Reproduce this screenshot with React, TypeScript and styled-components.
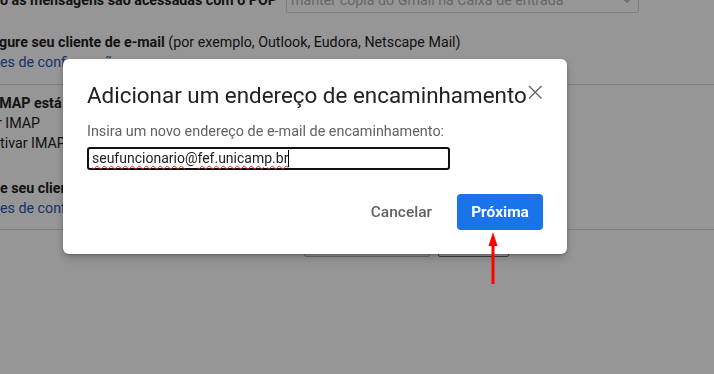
import React from "react";
import styled, { createGlobalStyle } from "styled-components";

const GlobalStyle = createGlobalStyle`
  html, body { margin: 0; padding: 0; background: #ffffff; overflow: hidden; }
  body { font-family: Roboto, "Liberation Sans", Arial, sans-serif; color: #222222; }
  * { box-sizing: border-box; }
`;

const Page = styled.div`
  width: 714px;
  height: 374px;
  margin-top: -14px;
  font-size: 14.25px;
  line-height: 20px;
  white-space: nowrap;
  overflow: hidden;
`;

const PopRow = styled.div`
  display: flex;
  align-items: center;
  height: 27px;
`;

const PopLabel = styled.div`
  width: 286px;
  font-weight: 700;
`;

const SelectBox = styled.div`
  width: 353px;
  height: 27px;
  border: 1px solid #d6d6d6;
  border-radius: 2px;
  display: flex;
  align-items: center;
  justify-content: space-between;
  padding: 0 6px 0 4px;
  color: #b0b0b0;
`;

const Line = styled.div<{ $shift?: number; $gap?: number }>`
  margin-left: ${(p) => p.$shift ?? 0}px;
  margin-top: ${(p) => p.$gap ?? 0}px;
  height: 20px;
`;

const Bold = styled.span`
  font-weight: 700;
`;

const Link = styled.span`
  color: #2a55b8;
`;

const Rule = styled.hr<{ $gap: number }>`
  margin: ${(p) => p.$gap}px 0 0 0;
  border: none;
  border-top: 1px solid #d9d9d9;
  height: 0;
`;

const Section = styled.div<{ $pad: number }>`
  padding-top: ${(p) => p.$pad}px;
`;

const ButtonBar = styled.div`
  display: flex;
  gap: 8px;
  padding-left: 304px;
  margin-top: 3px;
`;

const PageButton = styled.div<{ $w: number; $dark?: boolean }>`
  width: ${(p) => p.$w}px;
  height: 24px;
  border: 1px solid ${(p) => (p.$dark ? "#6a6a6a" : "#b5b5b5")};
  border-radius: 2px;
  background: ${(p) => (p.$dark ? "#ffffff" : "#f2f2f2")};
`;

const Overlay = styled.div`
  position: fixed;
  inset: 0;
  background: rgba(0, 0, 0, 0.41);
`;

const Dialog = styled.div`
  position: fixed;
  left: 63px;
  top: 59px;
  width: 504px;
  background: #ffffff;
  border-radius: 6px;
  box-shadow: 0 4px 10px rgba(0, 0, 0, 0.22), 0 1px 3px rgba(0, 0, 0, 0.18);
  padding: 22px 24px 24px 24px;
  display: flex;
  flex-direction: column;
`;

const TitleRow = styled.div`
  display: flex;
  justify-content: space-between;
  align-items: flex-start;
  height: 28px;
`;

const Title = styled.h2`
  margin: 0;
  font-family: Roboto, "Liberation Sans", sans-serif;
  font-size: 22.4px;
  font-weight: 400;
  line-height: 28px;
  color: #202124;
  white-space: nowrap;
`;

const CloseIcon = styled.svg`
  width: 16px;
  height: 16px;
  margin-top: 3px;
  flex: none;
`;

const Prompt = styled.div`
  margin-top: 13px;
  font-size: 14.4px;
  line-height: 20px;
  color: #5f6368;
  white-space: nowrap;
`;

const InputBox = styled.div`
  margin-top: 5px;
  width: 363px;
  height: 23px;
  border: 2px solid #101010;
  border-radius: 3px;
  padding-left: 3px;
  font-size: 14px;
  line-height: 19px;
  color: #202124;
  display: flex;
  align-items: flex-start;
  white-space: nowrap;
`;

const Misspelled = styled.span`
  text-decoration: underline wavy #e02020;
  text-decoration-thickness: 1px;
  text-underline-offset: 2px;
`;

const Caret = styled.span`
  display: inline-block;
  width: 1px;
  height: 17px;
  margin-top: 1px;
  background: #000000;
`;

const Actions = styled.div`
  margin-top: 24px;
  display: flex;
  justify-content: flex-end;
  align-items: center;
  gap: 9px;
`;

const TextButton = styled.button`
  height: 36px;
  padding: 0 16px;
  border: none;
  background: transparent;
  font-family: Roboto, "Liberation Sans", sans-serif;
  font-size: 15.5px;
  font-weight: 500;
  color: #5f6368;
  border-radius: 4px;
`;

const PrimaryButton = styled.button`
  height: 36px;
  width: 86px;
  border: none;
  background: #1a73e8;
  font-family: Roboto, "Liberation Sans", sans-serif;
  font-size: 15.5px;
  font-weight: 700;
  color: #ffffff;
  border-radius: 4px;
`;

const Arrow = styled.svg`
  position: fixed;
  left: 486px;
  top: 230px;
  width: 14px;
  height: 56px;
`;

export default function App() {
  return (
    <>
      <GlobalStyle />
      <Page>
        <PopRow>
          <PopLabel>o as mensagens são acessadas com o POP</PopLabel>
          <SelectBox>
            <span>manter cópia do Gmail na Caixa de entrada</span>
            <svg width="10" height="6" viewBox="0 0 10 6">
              <path d="M1 1l4 4 4-4" fill="none" stroke="#b0b0b0" strokeWidth="1.5" />
            </svg>
          </SelectBox>
        </PopRow>
        <Line $gap={19} $shift={-1}>
          <Bold>gure seu cliente de e-mail</Bold> (por exemplo, Outlook, Eudora, Netscape Mail)
        </Line>
        <Line>
          <Link>es de configuração</Link>
        </Line>
        <Rule $gap={12} />
        <Section $pad={8}>
          <Line $shift={-5}>
            <Bold>IMAP está ativado</Bold>
          </Line>
          <Line $shift={-3}>r IMAP</Line>
          <Line $shift={0}>tivar IMAP</Line>
          <Line $gap={25}>
            <Bold>e seu cliente de e-mail</Bold>
          </Line>
          <Line>
            <Link>es de configuração</Link>
          </Line>
        </Section>
        <Rule $gap={11} />
        <ButtonBar>
          <PageButton $w={126} />
          <PageButton $w={71} $dark />
        </ButtonBar>
      </Page>
      <Overlay />
      <Dialog>
        <TitleRow>
          <Title>Adicionar um endereço de encaminhamento</Title>
          <CloseIcon viewBox="0 0 16 16">
            <path d="M2 2L14.5 14.5M14.5 2L2 14.5" stroke="#5f6368" strokeWidth="1.3" fill="none" />
          </CloseIcon>
        </TitleRow>
        <Prompt>Insira um novo endereço de e-mail de encaminhamento:</Prompt>
        <InputBox>
          <Misspelled>seufuncionario</Misspelled>
          <span>@</span>
          <Misspelled>fef.unicamp.br</Misspelled>
          <Caret />
        </InputBox>
        <Actions>
          <TextButton>Cancelar</TextButton>
          <PrimaryButton>Próxima</PrimaryButton>
        </Actions>
      </Dialog>
      <Arrow viewBox="0 0 14 56">
        <path d="M7 2L2.5 16H11.5Z" fill="#ff0000" />
        <line x1="7" y1="14" x2="7" y2="54" stroke="#ff0000" strokeWidth="3" />
      </Arrow>
    </>
  );
}
